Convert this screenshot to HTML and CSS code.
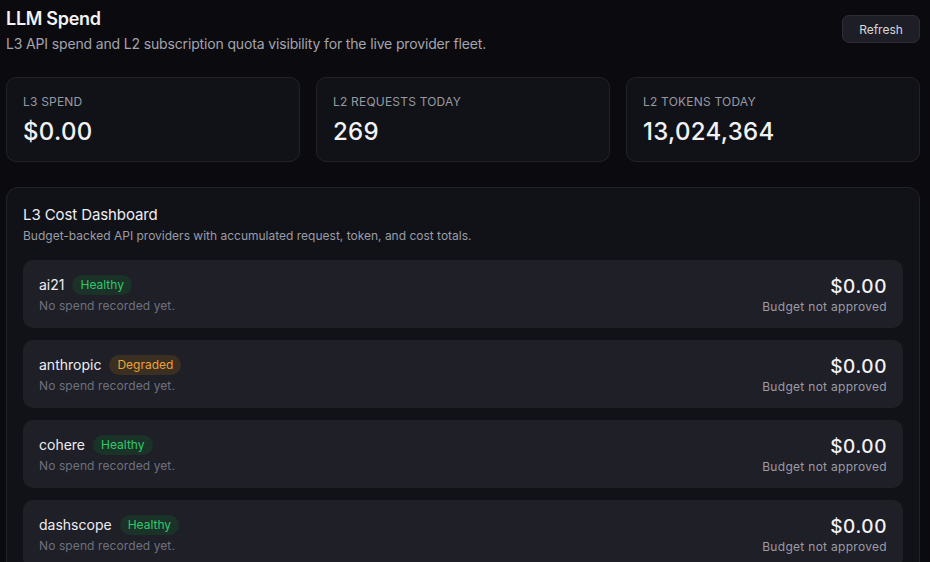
FILE: index.html
```html
<!DOCTYPE html>
<html>
<head>
<meta charset="utf-8">
<link rel="stylesheet" href="styles.css">
</head>
<body>
<div class="page">
  <header class="header">
    <div>
      <h1 class="title">LLM Spend</h1>
      <p class="subtitle">L3 API spend and L2 subscription quota visibility for the live provider fleet.</p>
    </div>
    <button class="btn">Refresh</button>
  </header>

  <section class="stats">
    <div class="stat"><div class="stat-label">L3 SPEND</div><div class="stat-value">$0.00</div></div>
    <div class="stat"><div class="stat-label">L2 REQUESTS TODAY</div><div class="stat-value">269</div></div>
    <div class="stat"><div class="stat-label">L2 TOKENS TODAY</div><div class="stat-value">13,024,364</div></div>
  </section>

  <section class="panel">
    <h2 class="panel-title">L3 Cost Dashboard</h2>
    <p class="panel-sub">Budget-backed API providers with accumulated request, token, and cost totals.</p>
    <div class="rows">
      <div class="row">
        <div class="row-left">
          <div class="row-name">ai21 <span class="badge ok">Healthy</span></div>
          <div class="row-note">No spend recorded yet.</div>
        </div>
        <div class="row-right"><div class="row-amount">$0.00</div><div class="row-note">Budget not approved</div></div>
      </div>
      <div class="row">
        <div class="row-left">
          <div class="row-name">anthropic <span class="badge warn">Degraded</span></div>
          <div class="row-note">No spend recorded yet.</div>
        </div>
        <div class="row-right"><div class="row-amount">$0.00</div><div class="row-note">Budget not approved</div></div>
      </div>
      <div class="row">
        <div class="row-left">
          <div class="row-name">cohere <span class="badge ok">Healthy</span></div>
          <div class="row-note">No spend recorded yet.</div>
        </div>
        <div class="row-right"><div class="row-amount">$0.00</div><div class="row-note">Budget not approved</div></div>
      </div>
      <div class="row">
        <div class="row-left">
          <div class="row-name">dashscope <span class="badge ok">Healthy</span></div>
          <div class="row-note">No spend recorded yet.</div>
        </div>
        <div class="row-right"><div class="row-amount">$0.00</div><div class="row-note">Budget not approved</div></div>
      </div>
    </div>
  </section>
</div>
</body>
</html>
```

FILE: styles.css
```css
* { box-sizing: border-box; }
html, body { margin: 0; background: #0b0b0f; }
body {
  font-family: Inter, "Noto Sans", sans-serif;
  color: #ececf0;
  overflow: hidden;
  height: 562px;
}
.page {
  padding: 8px 10px 0 6px;
  display: flex;
  flex-direction: column;
}
.header {
  display: flex;
  justify-content: space-between;
  align-items: flex-start;
}
.title {
  margin: 0;
  font-size: 18px;
  line-height: 22px;
  font-weight: 600;
  letter-spacing: -0.3px;
  color: #f2f2f5;
}
.subtitle {
  margin: 4px 0 0;
  font-size: 14px;
  line-height: 20px;
  color: #a3a4ae;
  letter-spacing: -0.15px;
}
.btn {
  margin-top: 7px;
  height: 28px;
  width: 78px;
  background: #1d1e26;
  border: 1px solid #2c2d36;
  border-radius: 7px;
  color: #d8d8de;
  font-family: Inter, sans-serif;
  font-size: 12px;
}
.stats {
  margin-top: 23px;
  display: grid;
  grid-template-columns: repeat(3, 1fr);
  gap: 16px;
}
.stat {
  height: 85px;
  background: #111217;
  border: 1px solid #222329;
  border-radius: 10px;
  padding: 17px 16px;
}
.stat-label {
  font-size: 12px;
  line-height: 14px;
  color: #979aa4;
  letter-spacing: 0.2px;
}
.stat-value {
  margin-top: 8px;
  font-size: 24px;
  line-height: 30px;
  font-weight: 500;
  color: #f2f2f5;
  letter-spacing: 0.3px;
}
.panel {
  margin-top: 25px;
  background: #111217;
  border: 1px solid #222329;
  border-radius: 12px;
  padding: 17px 16px 16px;
}
.panel-title {
  margin: 0;
  font-size: 15px;
  line-height: 20px;
  font-weight: 400;
  color: #eeeef2;
  letter-spacing: -0.1px;
}
.panel-sub {
  margin: 3px 0 0;
  font-size: 12px;
  line-height: 16px;
  color: #9a9ca6;
  letter-spacing: 0;
}
.rows {
  margin-top: 16px;
  display: flex;
  flex-direction: column;
  gap: 12px;
}
.row {
  height: 68px;
  background: #1e1f27;
  border-radius: 10px;
  padding: 13px 16px;
  display: flex;
  justify-content: space-between;
  align-items: center;
}
.row-name {
  font-size: 14px;
  line-height: 20px;
  color: #eeeef2;
  display: flex;
  align-items: center;
  gap: 8px;
}
.badge {
  font-size: 12px;
  line-height: 20px;
  padding: 0 8px;
  border-radius: 10px;
}
.badge.ok { color: #2fc86a; background: #1b3229; }
.badge.warn { color: #e9a23b; background: #3a2f20; }
.row-note {
  margin-top: 3px;
  font-size: 12px;
  line-height: 16px;
  color: #6f717c;
  letter-spacing: 0.1px;
}
.row-right { text-align: right; padding-top: 3px; }
.row-right .row-note { color: #9a9ca6; letter-spacing: 0.3px; margin-top: 1px; }
.row-amount {
  font-size: 19px;
  line-height: 22px;
  font-weight: 500;
  color: #f2f2f5;
  letter-spacing: 0.6px;
}
```
